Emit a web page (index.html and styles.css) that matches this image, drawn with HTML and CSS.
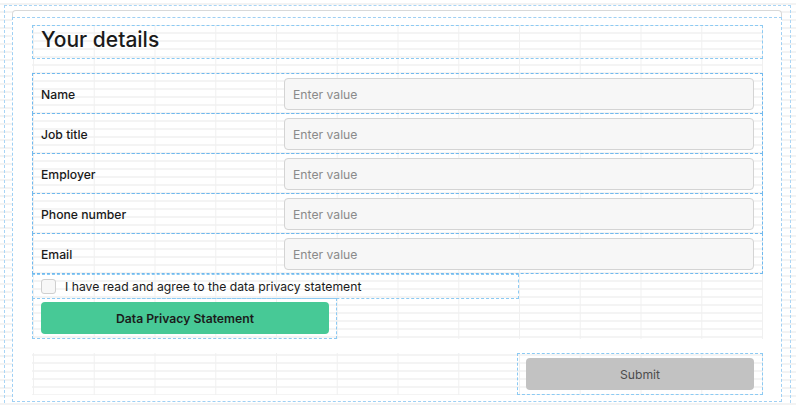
FILE: index.html
```html
<!DOCTYPE html>
<html lang="en">
<head>
    <meta charset="UTF-8">
    <meta name="viewport" content="width=device-width, initial-scale=1.0">
    <title>Your details</title>
    <link rel="stylesheet" href="styles.css">
</head>
<body>
    <div class="frame">
        <div class="card">
            <div class="section">
                <div class="form grid-bg">
                    <div class="box title-box">
                        <h1>Your details</h1>
                    </div>

                    <div class="fields">
                        <div class="field">
                            <label for="name">Name</label>
                            <input type="text" id="name" placeholder="Enter value">
                        </div>
                        <div class="field">
                            <label for="jobTitle">Job title</label>
                            <input type="text" id="jobTitle" placeholder="Enter value">
                        </div>
                        <div class="field">
                            <label for="employer">Employer</label>
                            <input type="text" id="employer" placeholder="Enter value">
                        </div>
                        <div class="field">
                            <label for="phone">Phone number</label>
                            <input type="text" id="phone" placeholder="Enter value">
                        </div>
                        <div class="field">
                            <label for="email">Email</label>
                            <input type="text" id="email" placeholder="Enter value">
                        </div>
                    </div>

                    <div class="box check-box">
                        <label class="check-label">
                            <span class="check"></span>
                            I have read and agree to the data privacy statement
                        </label>
                    </div>

                    <div class="box btn-box">
                        <button class="btn-green">Data Privacy Statement</button>
                    </div>
                </div>

                <div class="actions grid-bg">
                    <div class="box submit-box">
                        <button class="btn-submit">Submit</button>
                    </div>
                </div>
            </div>
        </div>
    </div>
</body>
</html>
```

FILE: styles.css
```css
/* Form builder canvas */
body {
    font-family: Inter, "Noto Sans", Arial, sans-serif;
    margin: 0;
    padding: 0;
    height: 405px;
    overflow: hidden;
    background-color: #fff;
    background-image: linear-gradient(to bottom, #f3f3f3 2px, transparent 2px);
    background-size: 100% 8px;
    background-position: 0 3px;
    color: #1a1a1a;
}

.frame {
    margin: 5px 5px 0 4px;
    border: 1px dashed #a9d5f5;
    padding: 4px 8px 20px 7px;
}

.card {
    background-color: #fff;
    border: 1px solid #d9d9d9;
    border-bottom: none;
    border-radius: 4px 4px 0 0;
    padding-top: 6px;
}

.section {
    margin: 0 -1px;
    border: 1px dashed #9fd0f4;
    background-color: #fff;
    padding: 7px 18px 6px 19px;
}

.grid-bg {
    background-image:
        linear-gradient(to right, #f0f0f0 1px, transparent 1px),
        linear-gradient(to bottom, #f4f4f4 2px, transparent 2px);
    background-size: 60.75px 100%, 100% 8px;
    background-position: 1px 0, 0 7px;
}

.box {
    border: 1px dashed #8ccaf3;
    box-sizing: border-box;
}

.title-box {
    height: 34px;
    padding: 0 8px 4px;
}

h1 {
    margin: 0;
    font-size: 21px;
    font-weight: 500;
    line-height: 28px;
}

.fields {
    margin-top: 14px;
}

.field {
    display: grid;
    grid-template-columns: 243px 1fr;
    align-items: center;
    height: 41px;
    box-sizing: border-box;
    border: 1px dashed #6fb9ef;
    padding: 4px 8px 3px;
}

.field + .field {
    margin-top: -1px;
}

.field label {
    font-size: 12.2px;
    font-weight: 500;
}

.field input {
    height: 32px;
    box-sizing: border-box;
    border: 1px solid #d4d4d4;
    border-radius: 4px;
    background-color: #f7f7f7;
    padding: 0 8px;
    font-family: inherit;
    font-size: 12.2px;
    outline: none;
}

.field input::placeholder {
    color: #8a8a8a;
}

.check-box {
    width: 487px;
    height: 25px;
    padding-left: 8px;
    display: flex;
    align-items: center;
}

.check-label {
    display: flex;
    align-items: center;
    gap: 9px;
    font-size: 12.2px;
    line-height: 15px;
    margin-top: -1px;
}

.check {
    width: 15px;
    height: 15px;
    box-sizing: border-box;
    border: 1px solid #cfcfcf;
    border-radius: 3px;
    background-color: #f7f7f7;
}

.btn-box {
    width: 305px;
    height: 41px;
    margin-top: -1px;
    padding: 3px 7px 2px 8px;
}

.btn-green {
    width: 100%;
    height: 32px;
    border: none;
    border-radius: 4px;
    background-color: #47c996;
    color: #1b1b1b;
    font-family: inherit;
    font-size: 12.2px;
    font-weight: 600;
}

.actions {
    margin-top: 14px;
    display: flex;
    justify-content: flex-end;
    background-position: 1px 0, 0 1px;
}

.submit-box {
    width: 246px;
    height: 42px;
    padding: 4px 8px;
}

.btn-submit {
    width: 100%;
    height: 32px;
    border: none;
    border-radius: 4px;
    background-color: #c2c2c2;
    color: #4d4d4d;
    font-family: inherit;
    font-size: 12.2px;
    font-weight: 400;
}
```
